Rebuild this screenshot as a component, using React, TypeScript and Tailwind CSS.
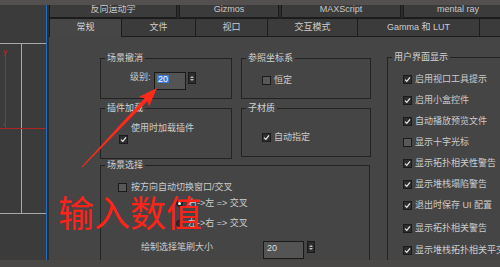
import React from 'react';

type Props = { children?: React.ReactNode; className?: string };

const Check = ({ checked }: { checked: boolean }) => (
  <span
    className={`w-[9px] h-[9px] shrink-0 border border-[#1b1b1b] flex items-center justify-center ${
      checked ? 'bg-[#2e2e2e]' : 'bg-[#585858]'
    }`}
  >
    {checked && (
      <svg width="7" height="7" viewBox="0 0 7 7">
        <path d="M1 3.6 L2.8 5.4 L6 1.4" fill="none" stroke="#e8e8e8" strokeWidth="1.3" />
      </svg>
    )}
  </span>
);

const CheckRow = ({ label, checked, className = '' }: { label: string; checked: boolean; className?: string }) => (
  <div className={`flex items-center gap-[3px] h-[12px] ${className}`}>
    <Check checked={checked} />
    <span className="leading-[12px] whitespace-nowrap">{label}</span>
  </div>
);

const Radio = ({ on }: { on: boolean }) => (
  <span className="w-[7px] h-[7px] rounded-full border border-[#1b1b1b] bg-[#2e2e2e] flex items-center justify-center shrink-0">
    {on && <span className="w-[3px] h-[3px] rounded-full bg-[#f0f0f0]" />}
  </span>
);

const Spinner = ({ className = '' }: { className?: string }) => (
  <span className={`w-[8px] h-[12px] bg-[#2d2d2d] border border-[#1a1a1a] flex flex-col items-center justify-center gap-[1px] ${className}`}>
    <svg width="4" height="2" viewBox="0 0 4 2"><path d="M0 2 L2 0 L4 2Z" fill="#bdbdbd" /></svg>
    <svg width="4" height="2" viewBox="0 0 4 2"><path d="M0 0 L4 0 L2 2Z" fill="#bdbdbd" /></svg>
  </span>
);

const Group = ({ title, className = '', children }: Props & { title: string }) => (
  <div className={`relative border border-[#232323] shrink-0 ${className}`}>
    <span className="absolute -top-[7px] left-[4px] px-[2px] bg-[#454545] leading-[12px] whitespace-nowrap text-[#d2d2d2]">
      {title}
    </span>
    {children}
  </div>
);

const Viewport = () => (
  <svg width="46" height="255" viewBox="0 0 46 255" className="shrink-0 block">
    <rect width="46" height="255" fill="#3b3b3b" />
    <line x1="0" y1="38.5" x2="46" y2="38.5" stroke="#a8a8a8" />
    <line x1="21.5" y1="38" x2="21.5" y2="208" stroke="#a8a8a8" />
    <line x1="0" y1="208.5" x2="46" y2="208.5" stroke="#a8a8a8" />
    <line x1="5.5" y1="49" x2="5.5" y2="123" stroke="#b02424" />
    <line x1="0" y1="123.5" x2="46" y2="123.5" stroke="#b02424" />
    <text x="3" y="49" fontSize="8" fill="#c02828" fontFamily="Liberation Sans, sans-serif">y</text>
    <text x="3" y="121" fontSize="6" fill="#6a5050" fontFamily="Liberation Sans, sans-serif">z</text>
  </svg>
);

const topTabs = [
  { label: '反向运动学', w: 'w-[128px]' },
  { label: 'Gizmos', w: 'w-[100px]' },
  { label: 'MAXScript', w: 'w-[120px]' },
  { label: 'mental ray', w: 'w-[110px]' },
];

const mainTabs = [
  { label: '常规', w: 'w-[73px]', active: true },
  { label: '文件', w: 'w-[74px]' },
  { label: '视口', w: 'w-[72px]' },
  { label: '交互模式', w: 'w-[90px]' },
  { label: 'Gamma 和 LUT', w: 'w-[122px]' },
  { label: '', w: 'w-[40px]' },
];

const uiItems = [
  { label: '启用视口工具提示', checked: true, mt: '' },
  { label: '启用小盒控件', checked: true, mt: 'mt-[9px]' },
  { label: '自动播放预览文件', checked: true, mt: 'mt-[9px]' },
  { label: '显示十字光标', checked: false, mt: 'mt-[9px]' },
  { label: '显示拓扑相关性警告', checked: true, mt: 'mt-[9px]' },
  { label: '显示堆栈塌陷警告', checked: true, mt: 'mt-[9px]' },
  { label: '退出时保存 UI 配置', checked: true, mt: 'mt-[9px]' },
  { label: '显示拓扑相关警告', checked: true, mt: 'mt-[11px]' },
  { label: '显示堆栈拓扑相关平交', checked: true, mt: 'mt-[10px]' },
];

export default function App() {
  return (
    <div className="relative w-[500px] h-[267px] overflow-hidden flex flex-col bg-[#444444] text-[9px] text-[#cccccc] font-['Liberation_Sans','Noto_Sans_CJK_SC',sans-serif]">
      <div className="h-[5px] bg-[#555050] shrink-0" />

      <div className="flex h-[255px] shrink-0">
        <Viewport />
        <div className="w-[1px] bg-[#1f6fc2] shrink-0" />

        <div className="flex-1 min-w-0 pl-[2px] bg-[#2c2c2c] flex flex-col overflow-hidden">
          {/* tab row 1 */}
          <div className="flex gap-[2px] h-[13px] shrink-0">
            {topTabs.map((t) => (
              <div
                key={t.label}
                className={`${t.w} shrink-0 h-[13px] overflow-hidden bg-[#3b3b3b] border-x border-b border-[#1c1c1c] flex justify-center`}
              >
                <span className="-mt-[2px] leading-[12px] whitespace-nowrap text-[#c8c8c8]">{t.label}</span>
              </div>
            ))}
          </div>

          {/* tab row 2 */}
          <div className="flex h-[19px] shrink-0">
            {mainTabs.map((t, i) => (
              <div
                key={i}
                className={`${t.w} shrink-0 h-[19px] flex items-center justify-center whitespace-nowrap border-t border-[#1c1c1c] ${
                  t.active
                    ? 'bg-[#464646] border-x text-[#d4d4d4]'
                    : 'bg-[#3b3b3b] border-r border-b text-[#cccccc]'
                }`}
              >
                {t.label}
              </div>
            ))}
          </div>

          {/* content */}
          <div className="flex-1 bg-[#454545] flex pl-[51px] pt-[21px] gap-[16px] overflow-hidden">
            <div className="w-[271px] shrink-0 flex flex-col">
              <div className="flex gap-[9px] items-start">
                <Group title="场景撤消" className="w-[132px] h-[41px]">
                  <div className="flex items-start pt-[13px] pl-[29px]">
                    <span className="w-[24px] leading-[10px] whitespace-nowrap">级别:</span>
                    <div className="w-[32px] h-[18px] bg-[#545454] border border-[#1a1a1a] pl-[2px]">
                      <span className="inline-block bg-[#3a78d4] text-white leading-[8px] h-[8px] px-[1px]">20</span>
                    </div>
                    <Spinner className="ml-[2px]" />
                  </div>
                </Group>
                <Group title="参照坐标系" className="w-[130px] h-[41px]">
                  <div className="pt-[15px] pl-[20px]">
                    <CheckRow label="恒定" checked={false} />
                  </div>
                </Group>
              </div>

              <div className="flex gap-[9px] items-start mt-[9px]">
                <Group title="插件加载" className="w-[132px] h-[51px]">
                  <div className="pt-[13px] pl-[30px] leading-[12px] whitespace-nowrap">使用时加载插件</div>
                  <div className="pl-[18px] mt-[1px]">
                    <Check checked />
                  </div>
                </Group>
                <Group title="子材质" className="w-[130px] h-[49px]">
                  <div className="pt-[22px] pl-[20px]">
                    <CheckRow label="自动指定" checked />
                  </div>
                </Group>
              </div>

              <Group title="场景选择" className="w-[270px] h-[110px] mt-[6px]">
                <div className="pt-[15px] pl-[17px]">
                  <div className="flex items-center gap-[4px] h-[12px]">
                    <Check checked={false} />
                    <span className="leading-[12px] whitespace-nowrap">按方向自动切换窗口/交叉</span>
                  </div>
                </div>
                <div className="pl-[75px] mt-[4px] flex items-center gap-[5px] h-[12px]">
                  <Radio on />
                  <span className="leading-[12px] whitespace-nowrap">右-&gt;左 =&gt; 交叉</span>
                </div>
                <div className="pl-[75px] mt-[8px] flex items-center gap-[5px] h-[12px]">
                  <Radio on={false} />
                  <span className="leading-[12px] whitespace-nowrap">左-&gt;右 =&gt; 交叉</span>
                </div>
                <div className="pl-[40px] mt-[12px] flex items-start">
                  <span className="w-[122px] leading-[12px] whitespace-nowrap">绘制选择笔刷大小</span>
                  <div className="w-[41px] h-[18px] bg-[#545454] border border-[#1a1a1a] pl-[3px] leading-[12px] text-[#dddddd]">
                    20
                  </div>
                  <Spinner className="ml-[3px]" />
                </div>
              </Group>
            </div>

            <Group title="用户界面显示" className="w-[140px] h-[230px] -mt-[1px]">
              <div className="pt-[15px] pl-[15px] flex flex-col">
                {uiItems.map((it) => (
                  <CheckRow key={it.label} label={it.label} checked={it.checked} className={it.mt} />
                ))}
              </div>
            </Group>
          </div>
        </div>
      </div>

      <div className="h-[7px] bg-[#4a4747] shrink-0" />

      {/* annotation overlays */}
      <svg className="absolute left-0 top-0 pointer-events-none" width="500" height="267" viewBox="0 0 500 267">
        <polygon
          points="81.6,166.7 144.55,98.22 138.8,97 157,88 149,106.6 147.45,100.98 82.4,167.3"
          fill="#ff2a1a"
        />
      </svg>
      <div className="absolute left-[58px] top-[193px] text-[36px] leading-[36px] text-[#ff2218] whitespace-nowrap font-['Noto_Sans_CJK_SC',sans-serif]">
        输入数值
      </div>
    </div>
  );
}
